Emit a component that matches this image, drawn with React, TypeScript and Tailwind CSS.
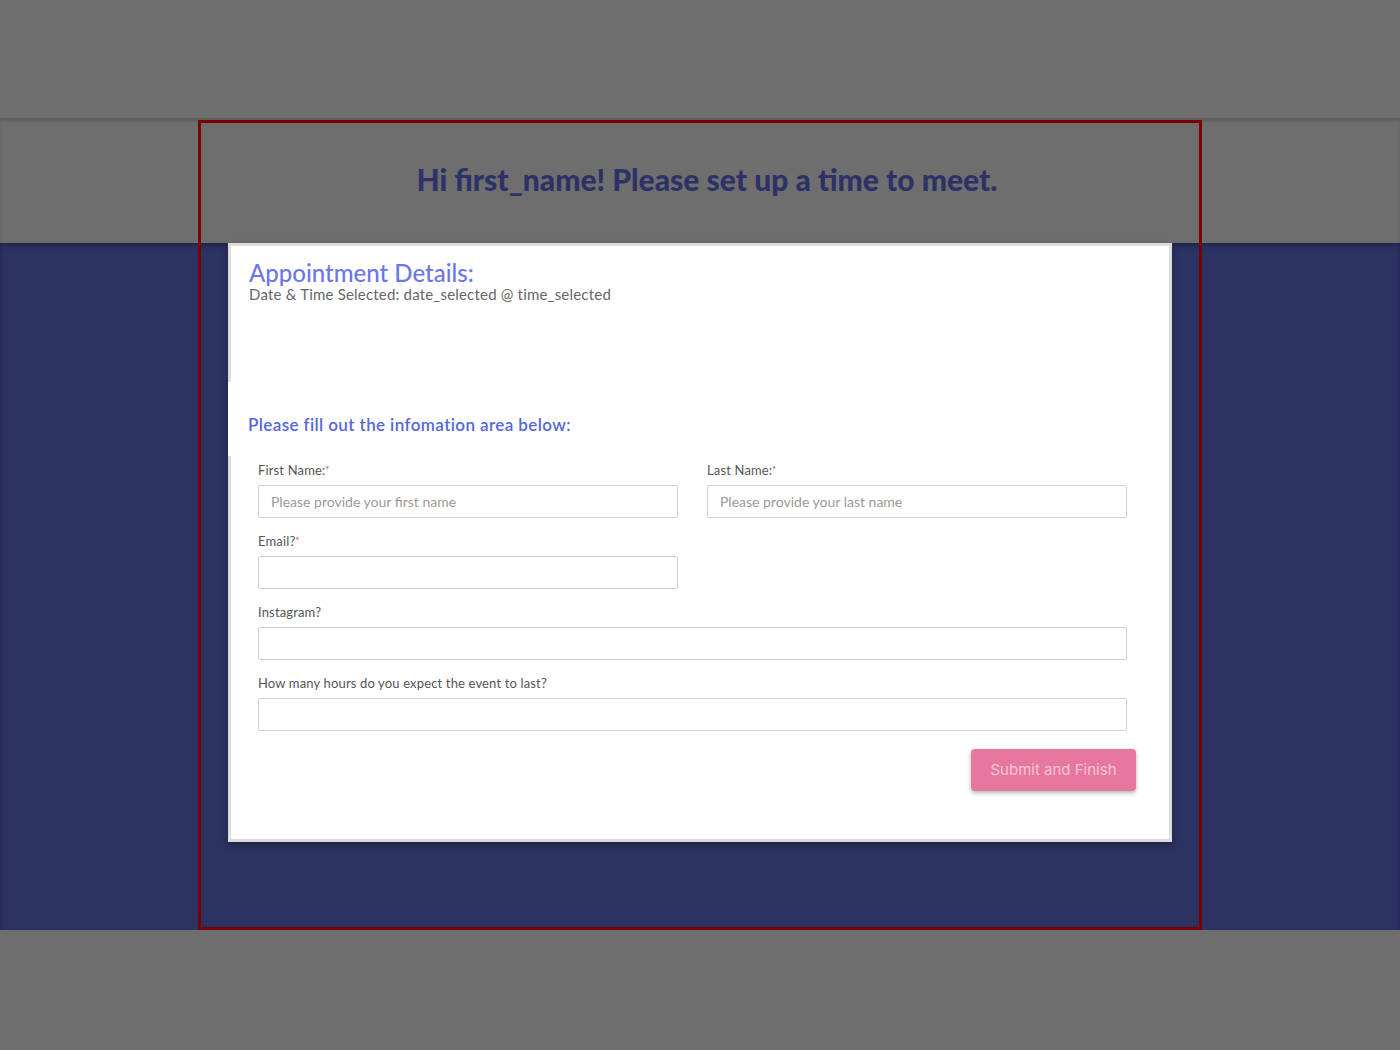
import React from 'react'

function Field({
  label,
  required,
  placeholder,
  wide,
}: {
  label: string
  required?: boolean
  placeholder?: string
  wide?: boolean
}) {
  return (
    <div className={wide ? 'w-full' : 'w-[420px]'}>
      <label className="block h-[16px] text-[13px] leading-[16px] tracking-[0.15px] text-[#555]">
        {label}
        {required && <span className="text-[9px] align-top text-[#c0392b]">*</span>}
      </label>
      <input
        type="text"
        placeholder={placeholder}
        className="mt-[7px] block h-[33px] w-full rounded-[2px] border border-[#cfcfcf] bg-white px-[12px] text-[14px] text-[#555] placeholder:text-[#9a9a9a] outline-none"
      />
    </div>
  )
}

export default function App() {
  return (
    <div
      className="relative min-h-[1050px] w-full bg-[#6e6e6e]"
      style={{ fontFamily: 'Lato, "Open Sans", sans-serif' }}
    >
      {/* top band */}
      <div className="h-[118px]" />

      {/* header */}
      <div className="flex h-[125px] items-center justify-center border-t border-[#5e5e5e] shadow-[inset_0_2px_3px_rgba(0,0,0,0.15)]">
        <h1 className="ml-[14px] -mt-[4px] text-[30px] font-black tracking-[0px] text-[#2c3266]">
          Hi first_name! Please set up a time to meet.
        </h1>
      </div>

      {/* main navy area */}
      <div className="h-[687px] bg-[#2c3262] shadow-[inset_0_3px_4px_rgba(0,0,0,0.25)]">
        <div className="relative mx-auto h-[599px] w-[944px] border-[3px] border-[#dcdcdc] bg-white shadow-[0_3px_6px_rgba(0,0,0,0.35)]">
          <div className="px-[18px] pt-[13px]">
            <h2 className="text-[24px] font-medium leading-[28px] text-[#6b77e6]">
              Appointment Details:
            </h2>
            <p className="-mt-[2px] text-[15px] leading-[18px] tracking-[0.2px] text-[#666]">
              Date &amp; Time Selected: date_selected @ time_selected
            </p>
          </div>

          <div className="-ml-[3px] mt-[79px] h-[74px] bg-white pl-[20px] pt-[33px]">
            <h3 className="text-[17px] font-semibold leading-[20px] tracking-[0.4px] text-[#5566e0]">
              Please fill out the infomation area below:
            </h3>
          </div>

          <div className="pl-[27px] pr-[42px] pt-[6px]">
            <div className="flex gap-[29px]">
              <Field label="First Name:" required placeholder="Please provide your first name" />
              <Field label="Last Name:" required placeholder="Please provide your last name" />
            </div>
            <div className="mt-[15px]">
              <Field label="Email?" required />
            </div>
            <div className="mt-[15px]">
              <Field label="Instagram?" wide />
            </div>
            <div className="mt-[15px]">
              <Field label="How many hours do you expect the event to last?" wide />
            </div>
            <div className="-mr-[9px] mt-[18px] flex justify-end">
              <button
                className="h-[42px] w-[165px] rounded-[4px] bg-[#e8779f] text-[15px] text-[#f4c6d6] shadow-[0_2px_4px_rgba(0,0,0,0.3)]"
                style={{ fontFamily: 'Inter, sans-serif' }}
              >
                Submit and Finish
              </button>
            </div>
          </div>
        </div>
      </div>

      {/* selection outline overlay */}
      <div className="pointer-events-none absolute left-[198px] top-[120px] h-[810px] w-[1004px] border-[3px] border-[#7a0000]" />
    </div>
  )
}
